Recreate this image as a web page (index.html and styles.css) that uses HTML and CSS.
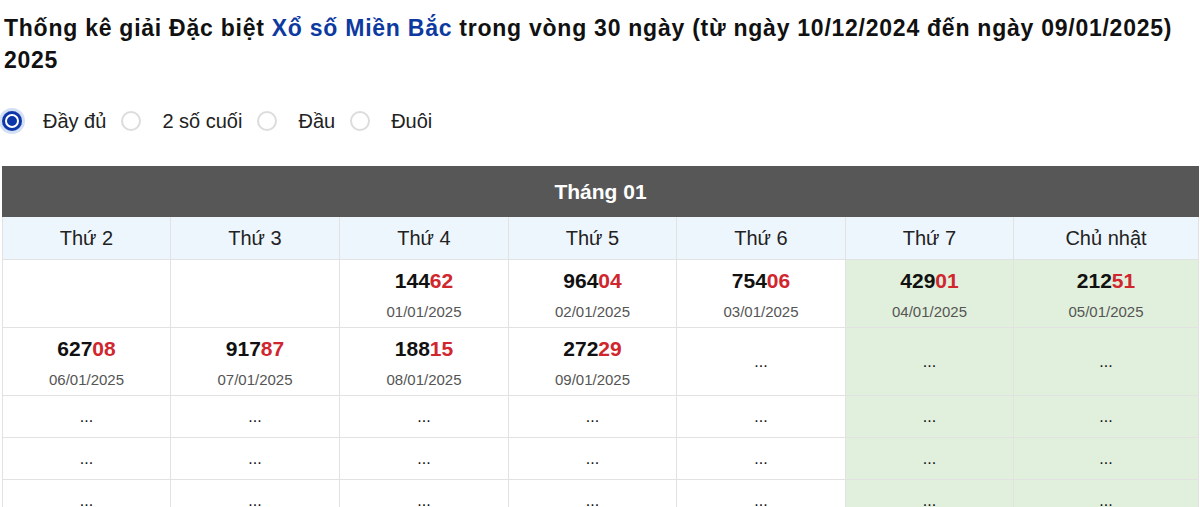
FILE: index.html
```html
<!DOCTYPE html>
<html lang="vi">
<head>
<meta charset="utf-8">
<title>Thống kê giải Đặc biệt</title>
<link rel="stylesheet" href="styles.css">
</head>
<body>
<div class="page">
  <h1 class="title">Thống kê giải Đặc biệt <a class="title-link" href="#">Xổ số Miền Bắc</a> trong vòng 30 ngày (từ ngày 10/12/2024 đến ngày 09/01/2025) 2025</h1>

  <div class="options">
    <label class="option"><span class="radio radio-checked"></span><span class="option-text">Đầy đủ</span></label>
    <label class="option"><span class="radio"></span><span class="option-text">2 số cuối</span></label>
    <label class="option"><span class="radio"></span><span class="option-text">Đầu</span></label>
    <label class="option"><span class="radio"></span><span class="option-text">Đuôi</span></label>
  </div>

  <table class="cal">
    <colgroup>
      <col class="c168"><col class="c169"><col class="c169"><col class="c168"><col class="c169"><col class="c168"><col class="c185">
    </colgroup>
    <thead>
      <tr><th class="month" colspan="7">Tháng 01</th></tr>
      <tr class="days">
        <th>Thứ 2</th><th>Thứ 3</th><th>Thứ 4</th><th>Thứ 5</th><th>Thứ 6</th><th>Thứ 7</th><th>Chủ nhật</th>
      </tr>
    </thead>
    <tbody>
      <tr class="row-res">
        <td></td>
        <td></td>
        <td><div class="num">144<span class="tail">62</span></div><div class="date">01/01/2025</div></td>
        <td><div class="num">964<span class="tail">04</span></div><div class="date">02/01/2025</div></td>
        <td><div class="num">754<span class="tail">06</span></div><div class="date">03/01/2025</div></td>
        <td class="wk"><div class="num">429<span class="tail">01</span></div><div class="date">04/01/2025</div></td>
        <td class="wk"><div class="num">212<span class="tail">51</span></div><div class="date">05/01/2025</div></td>
      </tr>
      <tr class="row-res">
        <td><div class="num">627<span class="tail">08</span></div><div class="date">06/01/2025</div></td>
        <td><div class="num">917<span class="tail">87</span></div><div class="date">07/01/2025</div></td>
        <td><div class="num">188<span class="tail">15</span></div><div class="date">08/01/2025</div></td>
        <td><div class="num">272<span class="tail">29</span></div><div class="date">09/01/2025</div></td>
        <td class="dots">...</td>
        <td class="wk dots">...</td>
        <td class="wk dots">...</td>
      </tr>
      <tr class="row-dots">
        <td>...</td><td>...</td><td>...</td><td>...</td><td>...</td><td class="wk">...</td><td class="wk">...</td>
      </tr>
      <tr class="row-dots">
        <td>...</td><td>...</td><td>...</td><td>...</td><td>...</td><td class="wk">...</td><td class="wk">...</td>
      </tr>
      <tr class="row-dots">
        <td>...</td><td>...</td><td>...</td><td>...</td><td>...</td><td class="wk">...</td><td class="wk">...</td>
      </tr>
    </tbody>
  </table>
</div>
</body>
</html>
```

FILE: styles.css
```css
* { box-sizing: border-box; }

html, body {
  margin: 0;
  padding: 0;
  background: #fff;
}

body {
  font-family: "Liberation Sans", Arial, sans-serif;
  color: #222;
}

.page {
  padding: 12px 2px 0 2px;
}

.title {
  margin: 0 0 0 2px;
  font-size: 23px;
  letter-spacing: 0.75px;
  line-height: 32px;
  font-weight: bold;
  color: #111;
}

.title-link {
  color: #0d3aa0;
  text-decoration: none;
}

.options {
  display: flex;
  align-items: center;
  margin-top: 30px;
  height: 30px;
}

.option {
  display: flex;
  align-items: center;
  margin-right: 15px;
}

.radio {
  width: 20px;
  height: 20px;
  border-radius: 50%;
  border: 2px solid #dcdcdc;
  background: #fff;
  margin-right: 21px;
  flex: none;
}

.radio-checked {
  border: none;
  background: #0d36a8;
  box-shadow: inset 0 0 0 3px #0d36a8, inset 0 0 0 5px #fff, 0 0 0 3px rgba(13, 80, 200, 0.18);
}

.option-text {
  font-size: 20px;
  line-height: 24px;
  color: #222;
}

.cal {
  margin-top: 30px;
  width: 1196px;
  table-layout: fixed;
  border-collapse: collapse;
}

.c168 { width: 168px; }
.c169 { width: 169px; }
.c185 { width: 185px; }

.cal th,
.cal td {
  border: 1px solid #e2e2e2;
  text-align: center;
  padding: 0;
}

.month {
  background: #575757;
  color: #fff;
  font-size: 21px;
  font-weight: bold;
  height: 50px;
  border-color: #575757 !important;
}

.days th {
  background: #eef6fd;
  font-weight: normal;
  font-size: 20px;
  color: #222;
  height: 43px;
}

.row-res td {
  height: 68px;
  padding: 7px 0 6px;
  vertical-align: top;
}

.row-res td.dots {
  vertical-align: middle;
  padding: 0;
}

.row-dots td {
  height: 42px;
  vertical-align: middle;
}

.dots,
.row-dots td {
  font-size: 16px;
  color: #111;
}

.wk {
  background: #e1f0dc;
}

.num {
  font-size: 21px;
  font-weight: bold;
  line-height: 28px;
  color: #111;
}

.tail {
  color: #d0262e;
}

.date {
  margin-top: 8px;
  font-size: 15px;
  line-height: 18px;
  color: #555;
}
```
